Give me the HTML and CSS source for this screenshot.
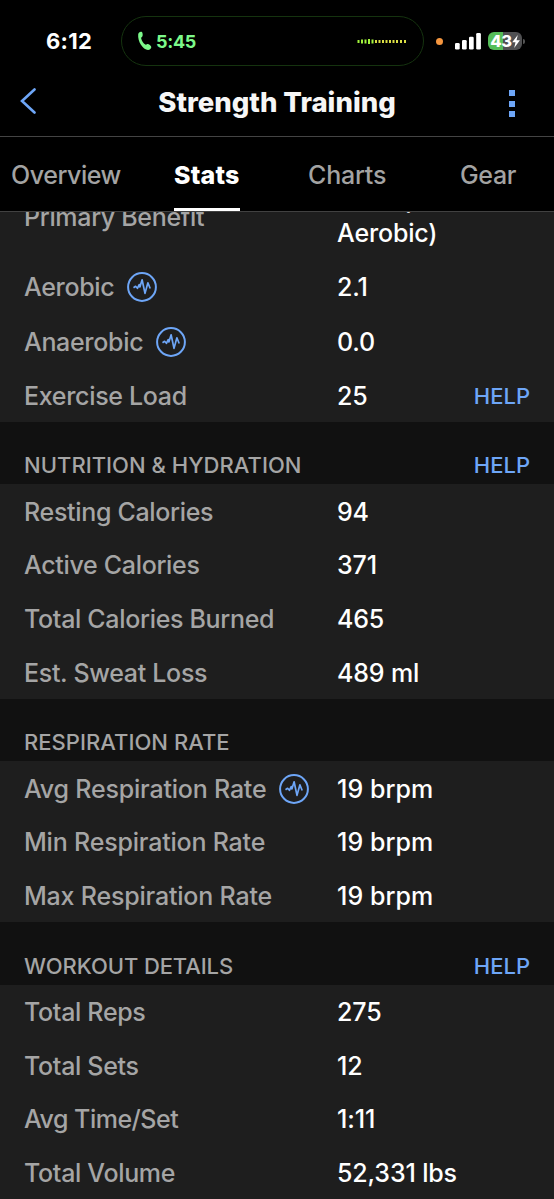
FILE: index.html
```html
<!DOCTYPE html>
<html lang="en">
<head>
<meta charset="utf-8">
<title>Strength Training</title>
<link rel="stylesheet" href="styles.css">
</head>
<body>
<svg class="defs" width="0" height="0">
  <symbol id="pulse" viewBox="0 0 30 30">
    <circle cx="15" cy="15" r="13.9" fill="none" stroke="currentColor" stroke-width="2"/>
    <path d="M6.500 15.800L8.600 14.300L10.400 16.300L12.200 12.600L12.900 15L15.100 7.800L18 21.400L20.900 10.800L23.200 16.500" fill="none" stroke="currentColor" stroke-width="1.700" stroke-linejoin="round"/>
  </symbol>
</svg>
<div class="screen">
  <header class="top">
    <div class="status">
      <span class="clock">6:12</span>
      <div class="island">
        <svg class="phone" width="15" height="20" viewBox="0 0 15 20"><path d="M1.2 3.2C1.5 1.3 3.2.4 4.5.8C5.8 1.2 6 4.5 5.3 5.6C4.9 6.3 4 6.5 4.2 7.4C4.7 9.7 6.4 12.2 8.3 13.6C9.1 14.1 9.5 13.2 10.2 13C11.5 12.6 14.2 14.7 14.3 16C14.4 17.5 12.8 19 11 19C6 18.7.4 10.5 1.2 3.2Z" fill="#7cf98a"/></svg>
        <span class="call">5:45</span>
        <svg class="wave" width="50" height="5" viewBox="0 0 50 5">
          <path d="M1.5 1v3M5 .5v4M8.5 .5v4M12 0v5M15.500 .5v4" stroke="#a2f43c" stroke-width="2"/>
          <path d="M19 1v3M22.500 1v3M26 1v3M29.500 1v3M33 1v3M36.500 1v3M40 1v3M44 1v3M48 1v3" stroke="#dcdf45" stroke-width="2"/>
        </svg>
      </div>
      <span class="dot"></span>
      <svg class="signal" width="27" height="17" viewBox="0 0 27 17" fill="#fff"><rect x="0" y="10" width="4.700" height="6.500" rx="1.300"/><rect x="7" y="7" width="4.700" height="9.500" rx="1.300"/><rect x="14" y="3.700" width="4.700" height="12.800" rx="1.300"/><rect x="21.200" y="0" width="4.700" height="16.500" rx="1.300"/></svg>
      <div class="battery"><span>43</span><svg width="8" height="13" viewBox="0 0 8 13"><path d="M5.800 0L.2 7.200H3.500L2.200 13L7.900 5.300H4.500Z" fill="#fff"/></svg></div>
      <span class="nub"></span>
    </div>
    <div class="nav">
      <svg class="back" width="17" height="26" viewBox="0 0 17 26"><path d="M14.500 1.500L2 13L14.500 24.500" fill="none" stroke="#6ea6f7" stroke-width="2.600" stroke-linecap="round" stroke-linejoin="miter"/></svg>
      <h1 class="title">Strength Training</h1>
      <div class="more"><i></i><i></i><i></i></div>
    </div>
  </header>
  <nav class="tabs">
    <span class="tab overview">Overview</span>
    <span class="tab active">Stats</span>
    <span class="tab charts">Charts</span>
    <span class="tab gear">Gear</span>
  </nav>
  <main class="content">
    <section class="rows first">
      <div class="row benefit"><span class="label">Primary Benefit</span><span class="value">Base (Low<br>Aerobic)</span></div>
      <div class="row"><span class="label">Aerobic<svg class="pulse"><use href="#pulse"/></svg></span><span class="value">2.1</span></div>
      <div class="row"><span class="label">Anaerobic<svg class="pulse"><use href="#pulse"/></svg></span><span class="value">0.0</span></div>
      <div class="row"><span class="label">Exercise Load</span><span class="value">25</span><span class="help">HELP</span></div>
    </section>
    <div class="heading"><h2>NUTRITION &amp; HYDRATION</h2><span class="help">HELP</span></div>
    <section class="rows">
      <div class="row"><span class="label">Resting Calories</span><span class="value">94</span></div>
      <div class="row"><span class="label">Active Calories</span><span class="value">371</span></div>
      <div class="row"><span class="label">Total Calories Burned</span><span class="value">465</span></div>
      <div class="row"><span class="label">Est. Sweat Loss</span><span class="value">489 ml</span></div>
    </section>
    <div class="heading"><h2>RESPIRATION RATE</h2></div>
    <section class="rows respiration">
      <div class="row"><span class="label">Avg Respiration Rate<svg class="pulse"><use href="#pulse"/></svg></span><span class="value">19 brpm</span></div>
      <div class="row"><span class="label">Min Respiration Rate</span><span class="value">19 brpm</span></div>
      <div class="row"><span class="label">Max Respiration Rate</span><span class="value">19 brpm</span></div>
    </section>
    <div class="heading workout"><h2>WORKOUT DETAILS</h2><span class="help">HELP</span></div>
    <section class="rows">
      <div class="row"><span class="label">Total Reps</span><span class="value">275</span></div>
      <div class="row"><span class="label">Total Sets</span><span class="value">12</span></div>
      <div class="row"><span class="label tight">Avg Time/Set</span><span class="value">1:11</span></div>
      <div class="row"><span class="label">Total Volume</span><span class="value">52,331 lbs</span></div>
    </section>
  </main>
</div>
</body>
</html>
```
FILE: styles.css
```css
* { box-sizing: border-box; }
body { margin: 0; background: #000; font-family: Inter, "Liberation Sans", sans-serif; }
.defs { position: absolute; }
.screen { width: 554px; height: 1199px; overflow: hidden; display: flex; flex-direction: column; background: #000; color: #fff; }
.top { height: 137px; flex: none; border-bottom: 1px solid #444; }
.status { display: flex; align-items: center; height: 66px; padding-top: 16px; }
.clock { width: 75px; margin-left: 46px; font-size: 22px; font-weight: 700; letter-spacing: 0.3px; }
.island { display: flex; align-items: center; width: 303px; height: 50px; padding: 0 16px 0 15px; border: 1.500px solid #15330f; border-radius: 25px; }
.phone { flex: none; }
.call { margin-left: 4px; color: #7cf98a; font-size: 18px; font-weight: 700; letter-spacing: -0.3px; }
.wave { margin-left: auto; }
.dot { width: 7px; height: 7px; margin-left: 12px; border-radius: 50%; background: #f5963f; }
.signal { margin-left: 12px; }
.battery { display: flex; align-items: center; justify-content: center; width: 34px; height: 18px; margin-left: 6px; border-radius: 6px; background: linear-gradient(90deg, #55bd59 44%, #505052 44%); font-size: 16.500px; font-weight: 800; letter-spacing: -0.4px; line-height: 18px; }
.nub { width: 2px; height: 5px; margin-left: 1px; border-radius: 0 2px 2px 0; background: #555; }
.nav { display: grid; grid-template-columns: 60px 1fr 60px; align-items: center; height: 70px; }
.back { margin-left: 20px; }
.title { margin: 2px 0 0; text-align: center; color: #f6f6f6; font-size: 27.500px; font-weight: 800; letter-spacing: 0; line-height: 40px; white-space: nowrap; }
.more { display: flex; flex-direction: column; gap: 4.400px; margin: 5px 0 0 15px; }
.more i { width: 6px; height: 6px; background: #6ea6f7; }
.tabs { display: flex; height: 75px; flex: none; padding-left: 11px; border-bottom: 1px solid #414141; }
.tab { height: 75px; line-height: 76px; color: #a3a3a3; font-size: 25px; font-weight: 500; letter-spacing: -0.35px; white-space: nowrap; }
.overview { width: 163px; letter-spacing: -0.45px; }
.active { width: 66px; height: 74px; color: #fff; font-weight: 800; letter-spacing: 0.200px; border-bottom: 3px solid #fff; }
.charts { width: 152px; margin-left: 68px; letter-spacing: -0.2px; }
.content { flex: 1; min-height: 0; overflow: hidden; background: #111; }
.rows { background: #1e1e1e; }
.first { height: 210px; overflow: hidden; }
.row { display: grid; grid-template-columns: 313px 1fr auto; align-items: center; height: 53.670px; padding: 1px 24px 0; font-size: 25px; font-weight: 500; letter-spacing: -0.32px; line-height: 30px; white-space: nowrap; }
.first .row { height: 54.400px; padding-top: 0; }
.first .benefit { height: 60px; margin-top: -27px; margin-bottom: 15px; align-items: start; }
.benefit .label { margin-top: 17px; }
.benefit .value { line-height: 33px; margin-top: -1.500px; }
.label { display: flex; align-items: center; color: #a5a5a5; }
.value { color: #fff; font-weight: 500; letter-spacing: -0.15px; }
.pulse { width: 30px; height: 30px; margin-left: 13px; color: #6ea6f7; }
.respiration .row { letter-spacing: -0.2px; }
.respiration .value { letter-spacing: 0.050px; }
.tight { letter-spacing: -0.5px; }
.heading { display: flex; justify-content: space-between; align-items: center; height: 62.300px; padding: 24px 24px 0; line-height: 38px; }
.heading h2 { margin: 0; color: #a5a5a5; font-size: 22px; font-weight: 500; letter-spacing: 0.030px; white-space: nowrap; }
.heading.workout { height: 62.600px; padding-top: 25px; }
.workout h2 { letter-spacing: -0.1px; }
.help { color: #6ea6f7; font-size: 22px; font-weight: 500; letter-spacing: 0; }
```
